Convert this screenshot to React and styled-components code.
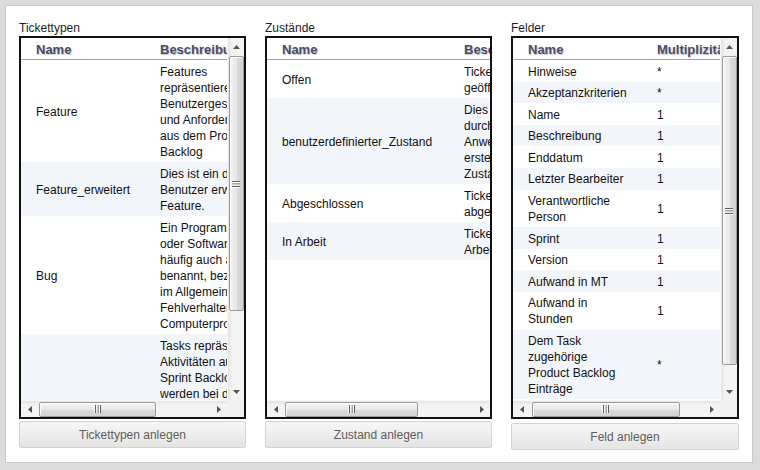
import React from "react";
import styled, { createGlobalStyle } from "styled-components";

const GlobalStyle = createGlobalStyle`
  body {
    margin: 0;
    background: #dcdcdc;
    font-family: "Liberation Sans", Arial, sans-serif;
  }
`;

const tickettypen = [
    { name: "Feature", text: "Features\nrepräsentieren\nBenutzergeschichten\nund Anforderungen\naus dem Product\nBacklog" },
    { name: "Feature_erweitert", text: "Dies ist ein durch den\nBenutzer erweitertes\nFeature." },
    { name: "Bug", text: "Ein Programmfehler\noder Softwarefehler,\nhäufig auch als Bug\nbenannt, bezeichnet\nim Allgemeinen ein\nFehlverhalten von\nComputerprogrammen." },
    { name: "Task", text: "Tasks repräsentieren\nAktivitäten aus dem\nSprint Backlog und\nwerden bei der\nSprintplanung aus\nden Benutzer-\ngeschichten\nabgeleitet und vom\nTeam bearbeitet." },
];

const zustaende = [
    { name: "Offen", text: "Ticket wurde\ngeöffnet" },
    { name: "benutzerdefinierter_Zustand", text: "Dies ist ein\ndurch den\nAnwender\nerstellter\nZustand" },
    { name: "Abgeschlossen", text: "Ticket wurde\nabgeschlossen" },
    { name: "In Arbeit", text: "Ticket ist in\nArbeit" },
];

const felder = [
    { name: "Hinweise", text: "*" },
    { name: "Akzeptanzkriterien", text: "*" },
    { name: "Name", text: "1" },
    { name: "Beschreibung", text: "1" },
    { name: "Enddatum", text: "1" },
    { name: "Letzter Bearbeiter", text: "1" },
    { name: "Verantwortliche\nPerson", text: "1" },
    { name: "Sprint", text: "1" },
    { name: "Version", text: "1" },
    { name: "Aufwand in MT", text: "1" },
    { name: "Aufwand in\nStunden", text: "1" },
    { name: "Dem Task\nzugehörige\nProduct Backlog\nEinträge", text: "*" },
];

const listen = [
    {
        titel: "Tickettypen", spalte: "Beschreibung", rows: tickettypen, cols: [124, 170], pad: 3,
        vscroll: { start: 1, size: 255 }, hscroll: { start: 1, size: 117 },
        button: "Tickettypen anlegen", offset: 2,
    },
    {
        titel: "Zustände", spalte: "Beschreibung", rows: zustaende, cols: [182, 136], pad: 3,
        vscroll: null, hscroll: { start: 1, size: 133 },
        button: "Zustand anlegen", offset: 2,
    },
    {
        titel: "Felder", spalte: "Multiplizität", rows: felder, cols: [129, 111], pad: 2.8,
        vscroll: { start: 1, size: 309 }, hscroll: { start: 2, size: 148 },
        button: "Feld anlegen", offset: 4,
    },
];

function Pfeil({ richtung }) {
    const punkte = {
        up: "0,4 3.5,0 7,4",
        down: "0,0 7,0 3.5,4",
        left: "4,0 4,7 0,3.5",
        right: "0,0 0,7 4,3.5",
    }[richtung];
    const quer = richtung === "up" || richtung === "down";
    return (
        <svg width={quer ? 7 : 4} height={quer ? 4 : 7} viewBox={quer ? "0 0 7 4" : "0 0 4 7"}>
            <polygon points={punkte} fill="#555555" />
        </svg>
    );
}

function Griff({ vertikal }) {
    return (
        <svg width="8" height="8" viewBox="0 0 8 8" style={vertikal ? undefined : { transform: "rotate(90deg)" }}>
            <rect x="0" y="1" width="8" height="1" fill="#606060" />
            <rect x="0" y="2" width="8" height="1" fill="#fafafa" />
            <rect x="0" y="3.5" width="8" height="1" fill="#606060" />
            <rect x="0" y="4.5" width="8" height="1" fill="#fafafa" />
            <rect x="0" y="6" width="8" height="1" fill="#606060" />
            <rect x="0" y="7" width="8" height="1" fill="#fafafa" />
        </svg>
    );
}

function Liste({ liste }) {
    const { titel, spalte, rows, cols, pad, vscroll, hscroll, button, offset } = liste;
    const spalten = `${cols[0]}px ${cols[1]}px`;

    return (
        <Spalte>
            <Titel>{titel}</Titel>
            <Rahmen $vscroll={!!vscroll}>
                <Ansicht>
                    <Kopf $cols={spalten}>
                        <KopfZelle>Name</KopfZelle>
                        <KopfZelle>{spalte}</KopfZelle>
                    </Kopf>
                    {rows.map((r, i) => (
                        <Zeile key={r.name} $cols={spalten} $pad={pad} $alt={i % 2 === 1}>
                            <Zelle>{r.name}</Zelle>
                            <Zelle>{r.text}</Zelle>
                        </Zeile>
                    ))}
                </Ansicht>
                {vscroll && (
                    <VLeiste>
                        <PfeilFeld><Pfeil richtung="up" /></PfeilFeld>
                        <VSpur>
                            <VDaumen $start={vscroll.start} $size={vscroll.size}>
                                <Griff vertikal />
                            </VDaumen>
                        </VSpur>
                        <PfeilFeld><Pfeil richtung="down" /></PfeilFeld>
                    </VLeiste>
                )}
                <HLeiste>
                    <PfeilFeld><Pfeil richtung="left" /></PfeilFeld>
                    <HSpur>
                        <HDaumen $start={hscroll.start} $size={hscroll.size}>
                            <Griff />
                        </HDaumen>
                    </HSpur>
                    <PfeilFeld><Pfeil richtung="right" /></PfeilFeld>
                </HLeiste>
                {vscroll && <Ecke />}
            </Rahmen>
            <Knopf $offset={offset}>{button}</Knopf>
        </Spalte>
    );
}

export default function App() {
    return (
        <>
            <GlobalStyle />
            <Seite>
                <Panel>
                    {listen.map(l => <Liste key={l.titel} liste={l} />)}
                </Panel>
            </Seite>
        </>
    );
}

const Seite = styled.div`
    padding: 5px 7px 0 5px;
`

const Panel = styled.div`
    box-sizing: border-box;
    width: 748px;
    height: 458px;
    background: #ffffff;
    border: 1px solid #c9c9c9;
    padding: 15px 0 0 13px;
    display: grid;
    grid-template-columns: 227px 227px 228px;
    column-gap: 19px;
    align-items: start;
`

const Spalte = styled.div`
    display: flex;
    flex-direction: column;
`

const Titel = styled.div`
    font-size: 12px;
    line-height: 15px;
    color: #1e1e1e;
`

const Rahmen = styled.div`
    box-sizing: border-box;
    height: 383px;
    border: 2px solid #111111;
    display: grid;
    grid-template-columns: ${props => props.$vscroll ? "1fr 17px" : "1fr"};
    grid-template-rows: 1fr 17px;
    overflow: hidden;
    background: #ffffff;
`

const Ansicht = styled.div`
    overflow: hidden;
    min-width: 0;
    min-height: 0;
`

const Kopf = styled.div`
    display: grid;
    grid-template-columns: ${props => props.$cols};
    width: max-content;
    height: 20px;
    padding-top: 1px;
    align-items: center;
    border-bottom: 1px solid #a3a3a3;
`

const KopfZelle = styled.div`
    padding-left: 15px;
    font-size: 13px;
    font-weight: 700;
    color: #4b4b68;
    text-shadow: 1px 1px 1px rgba(60, 60, 90, 0.3);
    white-space: nowrap;
`

const Zeile = styled.div`
    display: grid;
    grid-template-columns: ${props => props.$cols};
    width: max-content;
    align-items: center;
    padding: ${props => props.$pad + 0.7}px 0 ${props => props.$pad - 0.7}px;
    background: ${props => props.$alt ? "#f2f5fa" : "#ffffff"};
`

const Zelle = styled.div`
    padding-left: 15px;
    font-size: 12px;
    line-height: 16px;
    color: #111111;
    white-space: pre;
`

const PfeilFeld = styled.div`
    flex: 0 0 17px;
    height: 17px;
    width: 17px;
    display: flex;
    align-items: center;
    justify-content: center;
`

const VLeiste = styled.div`
    display: flex;
    flex-direction: column;
    background: linear-gradient(to right, #e4e4e4, #f2f2f2 25%, #f4f4f4);
    border-left: 1px solid #f7f7f7;
    box-sizing: border-box;
`

const VSpur = styled.div`
    flex: 1;
    display: flex;
    flex-direction: column;
    align-items: center;
`

const VDaumen = styled.div`
    box-sizing: border-box;
    margin-top: ${props => props.$start}px;
    height: ${props => props.$size}px;
    width: 15px;
    border: 1px solid #9b9b9b;
    border-radius: 2px;
    background: linear-gradient(to right, #f3f3f3, #e8e8e8 50%, #d9d9d9 51%, #d3d3d3);
    box-shadow: inset 1px 1px 0 #fcfcfc;
    display: flex;
    align-items: center;
    justify-content: center;
`

const HLeiste = styled.div`
    display: flex;
    background: linear-gradient(to bottom, #e4e4e4, #f2f2f2 25%, #f4f4f4);
    border-top: 1px solid #f7f7f7;
    box-sizing: border-box;
`

const HSpur = styled.div`
    flex: 1;
    display: flex;
    align-items: center;
`

const HDaumen = styled.div`
    box-sizing: border-box;
    margin-left: ${props => props.$start}px;
    width: ${props => props.$size}px;
    height: 15px;
    border: 1px solid #9b9b9b;
    border-radius: 2px;
    background: linear-gradient(to bottom, #f3f3f3, #e8e8e8 50%, #d9d9d9 51%, #d3d3d3);
    box-shadow: inset 1px 1px 0 #fcfcfc;
    display: flex;
    align-items: center;
    justify-content: center;
`

const Ecke = styled.div`
    background: #f0f0f0;
`

const Knopf = styled.button`
    margin-top: ${props => props.$offset}px;
    height: 27px;
    width: 100%;
    border: 1px solid #d3d3d3;
    border-radius: 2px;
    background: linear-gradient(to bottom, #f6f6f6, #eeeeee 50%, #e4e4e4);
    color: #5e5e5e;
    font-family: "Liberation Sans", Arial, sans-serif;
    font-size: 12px;
    padding: 1px 0 0;
    cursor: pointer;
`
